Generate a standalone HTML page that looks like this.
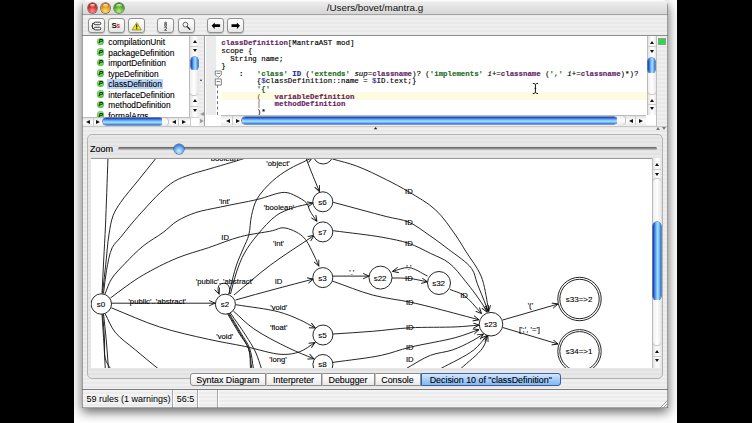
<!DOCTYPE html>
<html><head><meta charset="utf-8">
<style>
*{margin:0;padding:0;box-sizing:border-box}
html,body{width:752px;height:423px;overflow:hidden;background:#000}
body{position:relative;font-family:"Liberation Sans",sans-serif}
.a{position:absolute}
#desk{left:74px;top:0;width:603px;height:423px;background:#fdfdfd}
#win{left:82px;top:0;width:586px;height:408px;background:repeating-linear-gradient(#efefef 0,#efefef 2px,#e9e9e9 2px,#e9e9e9 4px);border-radius:6px 6px 0 0;box-shadow:0 4px 11px rgba(0,0,0,.6);overflow:hidden}
#title{left:0;top:0;width:586px;height:15px;background:linear-gradient(#fbfbfb 0,#fbfbfb 1px,#ececec 2px,#d6d6d6);border-bottom:1px solid #a2a2a2}
.tl{width:9.6px;height:9.6px;border-radius:50%;top:3.3px;box-shadow:0 0 0 .7px rgba(0,0,0,.55)}
.tl:after{content:"";position:absolute;left:2px;top:0.6px;width:5.6px;height:3.2px;border-radius:50%;background:linear-gradient(rgba(255,255,255,.9),rgba(255,255,255,.15))}
#ttl{left:0;width:586px;top:1.6px;text-align:center;font-size:9.8px;color:#111}
#tool{left:0;top:15px;width:586px;height:21.2px;border-bottom:1px solid #8f8f8f}
.btn{top:3.2px;width:17px;height:15.3px;border:1px solid #909090;border-radius:3px;background:linear-gradient(#ffffff,#f4f4f4 50%,#e4e4e4);box-shadow:0 1px 1px rgba(0,0,0,.2)}
.btn svg{position:absolute;left:0;top:0}
#tree{left:0;top:36px;width:107px;height:81px;background:#fff;overflow:hidden}
.row{position:absolute;left:13.8px;font-size:8.3px;color:#000;-webkit-text-stroke:0.12px #000;height:11px;line-height:11px;white-space:nowrap}
.row i{position:absolute;left:0.9px;top:0.7px;width:7.6px;height:7.6px;border-radius:50%;background:radial-gradient(circle at 50% 40%,#c8ffb8,#58d048 55%,#2a9a2a)}
.row i:after{content:"P";position:absolute;left:2.1px;top:-1.3px;font-size:6px;font-weight:bold;color:#000}
.row span{position:absolute;left:11px;top:0;padding:0 1.5px;height:10px;line-height:10.5px}
.mono{font-family:"Liberation Mono",monospace}
#code{left:136px;top:36px;width:428.5px;height:79px;background:#fff;overflow:hidden}
.ln{position:absolute;left:3.3px;font-family:"Liberation Mono",monospace;font-size:7.4px;line-height:7.6px;height:7.6px;white-space:pre;color:#000;-webkit-text-stroke:0.15px currentColor}
.p{color:#661f66;font-weight:bold}
.g{color:#1f6e1f;font-weight:bold}
.b{color:#1e2c96;font-weight:bold}
.it{font-style:italic}
.vs{background:linear-gradient(90deg,#e2e2e2,#fafafa 40%,#ffffff 60%,#e8e8e8);border-left:1px solid #bdbdbd}
.hs{background:linear-gradient(#e2e2e2,#fafafa 40%,#ffffff 60%,#e8e8e8);border-top:1px solid #bdbdbd}
.tri{position:absolute;width:0;height:0}
.up{border-left:2.3px solid transparent;border-right:2.3px solid transparent;border-bottom:3.3px solid #111}
.dn{border-left:2.3px solid transparent;border-right:2.3px solid transparent;border-top:3.3px solid #111}
.lf{border-top:2.5px solid transparent;border-bottom:2.5px solid transparent;border-right:4px solid #111;margin-top:-0.3px}
.rt{border-top:2.5px solid transparent;border-bottom:2.5px solid transparent;border-left:4px solid #111;margin-top:-0.3px}
.thumbv{background:linear-gradient(90deg,#1838a8 0,#3a78e0 20%,#7cc4ff 45%,#a8e4ff 60%,#68b4f8 80%,#3a70d0);border-radius:5px;box-shadow:0 0 0 .6px #203c90}
.thumbh{background:linear-gradient(#1838a8 0,#3a78e0 20%,#7cc4ff 45%,#a8e4ff 60%,#68b4f8 80%,#3a70d0);border-radius:5px;box-shadow:0 0 0 .6px #203c90}
#graph{left:8.5px;top:158px;width:561px;height:209.5px;background:#fff;overflow:hidden;border-top:1px solid #9a9a9a}
.tab{top:373.3px;height:13.2px;font-size:8.9px;line-height:12.3px;text-align:center;color:#000;-webkit-text-stroke:0.1px #000;border:1px solid #8d8d8d;border-left:1px solid #c4c4c4;background:linear-gradient(#ffffff,#f6f6f6 50%,#e8e8e8);}
#status{left:0;top:389px;width:586px;height:19px;border-top:1px solid #7d7d7d;background:repeating-linear-gradient(#f3f3f3 0,#f3f3f3 2px,#ececec 2px,#ececec 4px)}
.sdiv{position:absolute;top:0;width:2px;height:19px;border-left:1px solid #a8a8a8;border-right:1px solid #fff}
</style></head><body>
<div id="desk" class="a"></div>
<div id="win" class="a">
  <div id="title" class="a">
    <div class="a tl" style="left:5.6px;background:radial-gradient(circle at 50% 80%,#ff9090 0,#d83030 50%,#8c0c0c 95%)"></div>
    <div class="a tl" style="left:18.9px;background:radial-gradient(circle at 50% 80%,#ffe070 0,#eb9a10 50%,#9a5000 95%)"></div>
    <div class="a tl" style="left:32.2px;background:radial-gradient(circle at 50% 80%,#b8f080 0,#50b020 50%,#1e6008 95%)"></div>
    <div id="ttl" class="a">/Users/bovet/mantra.g</div>
  </div>
  <div id="tool" class="a">
    <div class="a btn" style="left:5.8px"></div>
    <div class="a btn" style="left:25.6px"></div>
    <div class="a btn" style="left:45.8px"></div>
    <div class="a btn" style="left:75.3px"></div>
    <div class="a btn" style="left:95.5px"></div>
    <div class="a btn" style="left:125.4px"></div>
    <div class="a btn" style="left:145.1px"></div>
  </div>

  <svg class="a" style="left:0;top:0" width="586" height="40" viewBox="82 0 586 40">
    <g fill="#f4f4f4" stroke="#111" stroke-width="0.8">
      <rect x="93.9" y="22.2" width="6.9" height="2.5" rx="1.25"/>
      <rect x="93.9" y="27.3" width="6.9" height="2.6" rx="1.3"/>
    </g>
    <path d="M93.9 23.45H92.5V28.6H93.9M92.5 26H91.2" fill="none" stroke="#111" stroke-width="0.8"/>
    <text x="111.6" y="28.4" font-family="Liberation Sans" font-weight="bold" font-size="8" fill="#111">S</text>
    <text x="116.5" y="28.4" font-family="Liberation Sans" font-weight="bold" font-size="6.5" fill="#e81818">s</text>
    <path d="M136.7 22.6L141.3 30H132.1Z" fill="#f4e800" stroke="#6a6a20" stroke-width="0.6"/>
    <path d="M136.7 24.6V27.6M136.7 28.3V29.2" stroke="#111" stroke-width="1.1"/>
    <circle cx="165.6" cy="23" r="0.95" fill="none" stroke="#222" stroke-width="0.7"/><circle cx="165.6" cy="25" r="1.05" fill="none" stroke="#222" stroke-width="0.7"/>
    <path d="M164.3 26.6H166.9" stroke="#555" stroke-width=".5"/>
    <path d="M164.5 28.1Q164.7 27 165.7 27.1Q166.8 27.3 166.4 28.4L164.5 30.3H166.9" fill="none" stroke="#222" stroke-width="0.75"/>
    <circle cx="185.4" cy="24.7" r="2.4" fill="#f4f4f4" stroke="#555" stroke-width="0.9"/>
    <path d="M187.1 26.6L189.8 29.2" stroke="#222" stroke-width="1.3" stroke-linecap="round"/>
    <path d="M211.6 25.65L214.7 22.4V24.2H220.1V27.1H214.7V28.9Z" fill="#000"/>
    <path d="M240 25.65L236.9 22.4V24.2H231.5V27.1H236.9V28.9Z" fill="#000"/>
  </svg>
  <!-- TREE -->
  <div id="tree" class="a"><div class="a" style="left:0;top:0.8px;width:107px;height:90px">
    <div class="row" style="top:0.3px"><i></i><span>compilationUnit</span></div>
    <div class="row" style="top:10.8px"><i></i><span>packageDefinition</span></div>
    <div class="row" style="top:21.3px"><i></i><span>importDefinition</span></div>
    <div class="row" style="top:31.8px"><i></i><span>typeDefinition</span></div>
    <div class="row" style="top:42.3px"><i></i><span style="background:#b8d4fa">classDefinition</span></div>
    <div class="row" style="top:52.8px"><i></i><span>interfaceDefinition</span></div>
    <div class="row" style="top:63.3px"><i></i><span>methodDefinition</span></div>
    <div class="row" style="top:73.8px"><i></i><span>formalArgs</span></div>
  </div></div>

  <!-- TREE SCROLLBARS -->
  <div class="a vs" style="left:107px;top:36px;width:9.5px;height:80.5px">
    <div class="tri up" style="left:2.6px;top:4.3px"></div>
    <div class="a" style="left:0;top:9.5px;width:8px;height:0.5px;background:#ccc"></div>
    <div class="tri dn" style="left:2.6px;top:12.8px"></div>
    <div class="a thumbv" style="left:0.8px;top:20.5px;width:7px;height:13.5px"></div>
    <div class="a" style="left:0;top:34px;width:8px;height:25px;border-radius:0 0 4px 4px;box-shadow:0 1px 1px rgba(0,0,0,.25);background:linear-gradient(90deg,#eee,#fff 50%,#e8e8e8)"></div>
    <div class="tri up" style="left:2.6px;top:63.3px"></div>
    <div class="a" style="left:0;top:69.5px;width:8px;height:0.5px;background:#ccc"></div>
    <div class="tri dn" style="left:2.6px;top:73.3px"></div>
  </div>
  <div class="a hs" style="left:0;top:116.5px;width:107.5px;height:9px">
    <div class="tri lf" style="left:4.3px;top:2.4px"></div>
    <div class="a" style="left:10.5px;top:0;width:0.5px;height:8px;background:#ccc"></div>
    <div class="tri rt" style="left:14.3px;top:2.4px"></div>
    <div class="a thumbh" style="left:20.7px;top:0.8px;width:60.7px;height:7.2px"></div>
    <div class="a" style="left:80px;top:0;width:6px;height:8px;border-radius:0 4px 4px 0;box-shadow:1px 0 1px rgba(0,0,0,.25);background:linear-gradient(#eee,#fff 50%,#e8e8e8)"></div>
    <div class="tri lf" style="left:89.8px;top:2.4px"></div>
    <div class="a" style="left:96px;top:0;width:0.5px;height:8px;background:#ccc"></div>
    <div class="tri rt" style="left:99.8px;top:2.4px"></div>
  </div>
  <div class="a" style="left:107.5px;top:116.5px;width:9px;height:9px;background:#fff;border-left:1px solid #d0d0d0;border-top:1px solid #d0d0d0"></div>
  <!-- SPLITTER V -->
  <div class="a" style="left:116.5px;top:36px;width:6px;height:90px;border-right:1px solid #a0a0a0"></div>
  <div class="tri up" style="left:117.7px;top:79px;border-bottom-color:#333;border-left-width:1.8px;border-right-width:1.8px;border-bottom-width:2.6px"></div>
  <div class="tri lf" style="left:117.5px;top:112.4px;border-right-color:#999"></div>
  <div class="tri rt" style="left:117.5px;top:119.6px;border-left-color:#999"></div>
  <!-- GUTTER -->
  <div class="a" style="left:123px;top:36px;width:13px;height:79px;background:#fff"></div>
  <div class="a" style="left:123.6px;top:36px;width:10.4px;height:79px;background:#ebebeb"></div>
  <div class="a" style="left:135.3px;top:85px;width:0;height:30px;border-left:1px dashed #777"></div>
  <div class="a" style="left:123px;top:115px;width:16px;height:10.5px;background:#fff"></div>
  <!-- CODE -->
  <div id="code" class="a">
    <div class="a" style="left:3.5px;top:56.2px;width:425px;height:7.6px;background:#fdfbe0"></div>
    <div class="ln" style="top:4.3px"><span class="p">classDefinition</span>[MantraAST mod]</div>
    <div class="ln" style="top:11.9px">scope {</div>
    <div class="ln" style="top:19.5px">  String name;</div>
    <div class="ln" style="top:27.1px">}</div>
    <div class="ln" style="top:34.7px">    <b>:</b>   <span class="g">'class'</span> <span class="b">ID</span> (<span class="g">'extends'</span> <span class="it">sup</span>=<span class="p">classname</span>)? (<span class="g">'implements'</span> <span class="it">i</span>+=<span class="p">classname</span> (<span class="g">','</span> <span class="it">i</span>+=<span class="p">classname</span>)*)?</div>
    <div class="ln" style="top:42.3px">        {<span style="color:#3030c0">$</span>classDefinition::name = <span style="color:#3030c0">$</span>ID.text;}</div>
    <div class="ln" style="top:49.9px">        <span class="g">'{'</span></div>
    <div class="ln" style="top:57.5px">        <span style="color:#7a5a3a">(</span>   <span class="p">variableDefinition</span></div>
    <div class="ln" style="top:65.1px">        <span style="color:#7a5a3a">|</span>   <span class="p">methodDefinition</span></div>
    <div class="ln" style="top:72.7px">        )*</div>
  </div>
  <svg class="a" style="left:448px;top:82px" width="10" height="13" viewBox="0 0 10 13">
    <path d="M2.8 1.3Q4.2 1.3 5.4 2.3Q6.6 1.3 8 1.3M5.4 2.3V10.6M2.8 11.6Q4.2 11.6 5.4 10.6Q6.6 11.6 8 11.6M4.6 6.4H6.2" fill="none" stroke="#111" stroke-width="1"/>
  </svg>
  <!-- fold markers -->
  <svg class="a" style="left:131px;top:69.5px" width="10" height="16" viewBox="0 0 10 16">
    <path d="M2.3 1h6v4l-3 2.4l-3-2.4z" fill="#fff" stroke="#666" stroke-width=".8"/>
    <path d="M3.5 3.4h3.6" stroke="#444" stroke-width=".7"/>
    <path d="M2.3 8.9h6v6.2h-6z" fill="#fff" stroke="#666" stroke-width=".8"/>
    <path d="M3.5 11.6h3.6" stroke="#444" stroke-width=".7"/>
  </svg>
  <!-- CODE SCROLLBARS -->
  <div class="a vs" style="left:564.5px;top:36px;width:9px;height:78.5px">
    <div class="tri up" style="left:2.6px;top:5.0px"></div>
    <div class="a" style="left:0;top:10px;width:8px;height:0.5px;background:#ccc"></div>
    <div class="tri dn" style="left:2.6px;top:13.8px"></div>
    <div class="a thumbv" style="left:0.8px;top:22px;width:7px;height:15px"></div>
    <div class="a" style="left:0;top:37px;width:8px;height:21px;border-radius:0 0 4px 4px;box-shadow:0 1px 1px rgba(0,0,0,.25);background:linear-gradient(90deg,#eee,#fff 50%,#e8e8e8)"></div>
    <div class="tri up" style="left:2.6px;top:62.8px"></div>
    <div class="a" style="left:0;top:68px;width:8px;height:0.5px;background:#ccc"></div>
    <div class="tri dn" style="left:2.6px;top:71.3px"></div>
  </div>
  <div class="a hs" style="left:139px;top:115.2px;width:425.5px;height:10.3px">
    <div class="tri lf" style="left:4.8px;top:3.0px"></div>
    <div class="a" style="left:10.5px;top:0;width:0.5px;height:9px;background:#ccc"></div>
    <div class="tri rt" style="left:14.8px;top:3.0px"></div>
    <div class="a thumbh" style="left:20.8px;top:0.7px;width:375.5px;height:7.4px"></div>
    <div class="a" style="left:395.5px;top:0;width:8px;height:9px;border-radius:0 4px 4px 0;box-shadow:1px 0 1px rgba(0,0,0,.25);background:linear-gradient(#eee,#fff 50%,#e8e8e8)"></div>
    <div class="tri lf" style="left:407.8px;top:3.0px"></div>
    <div class="a" style="left:413.5px;top:0;width:0.5px;height:9px;background:#ccc"></div>
    <div class="tri rt" style="left:417.8px;top:3.0px"></div>
  </div>
  <div class="a" style="left:564.2px;top:114.5px;width:9.8px;height:10.8px;background:#fff"></div>
  <!-- right strip -->
  <div class="a" style="left:573.5px;top:36px;width:12.5px;height:90px;border-left:1px solid #c0c0c0"></div>
  <div class="a" style="left:576.3px;top:37.9px;width:7.6px;height:7.5px;background:#22dd44;border:1px solid #999"></div>
  <div class="tri up" style="left:573.6px;top:127.1px;border-bottom-color:#7a7a7a;border-left-width:2.4px;border-right-width:2.4px;border-bottom-width:3.2px;z-index:2"></div>
  <div class="tri dn" style="left:580.4px;top:127.1px;border-top-color:#7a7a7a;border-left-width:2.4px;border-right-width:2.4px;border-top-width:3.2px;z-index:2"></div>
  <div class="a" style="left:0;top:125.5px;width:586px;height:0.6px;background:#c8c8c8"></div>
  <svg class="a" style="left:291px;top:126px" width="6" height="4" viewBox="0 0 6 4"><path d="M0.8 3.3L2.6 1L4.4 3.3Z" fill="#222"/></svg>
  <!-- GROUP BOX -->
  <div class="a" style="left:5px;top:134px;width:576.2px;height:244.6px;border:1px solid #b4b4b4;border-radius:5px;background:repeating-linear-gradient(#e8e8e8 0,#e8e8e8 2px,#e2e2e2 2px,#e2e2e2 4px)"></div>
  <div class="a" style="left:8px;top:143.5px;font-size:9px;color:#000;-webkit-text-stroke:0.12px #000">Zoom</div>
  <div class="a" style="left:35.5px;top:147.3px;width:539.5px;height:3.2px;border-radius:2px;background:linear-gradient(#5a5a5a,#9a9a9a 60%,#c8c8c8)"></div>
  <div class="a" style="left:91.7px;top:143.9px;width:10px;height:10px;border-radius:50%;background:radial-gradient(circle at 50% 70%,#d8f0ff 0,#6cb0f4 45%,#1d5ccc 90%);box-shadow:0 0 0 .6px #34508a"></div>
  <!-- MAIN GRAPH -->
  <div id="graph" class="a">
<svg class="a" style="left:0;top:-1px" width="561" height="209.5" viewBox="90.5 158 561 209.5">
<defs><marker id="ah" markerWidth="8" markerHeight="8" refX="6.2" refY="3" orient="auto" markerUnits="userSpaceOnUse"><path d="M0.3 0.3L6.2 3L0.3 5.7" fill="none" stroke="#111" stroke-width="0.9"/></marker></defs>
<g fill="none" stroke="#1a1a1a" stroke-width="0.95">
<path d="M101.5 293.5C102.1 282.3 102.6 271.3 103.2 260.0C103.8 248.5 104.4 238.6 105.0 225.0C105.8 206.1 106.7 179.7 107.5 157.0"/>
<path d="M102.0 293.5C103.2 283.0 104.4 272.1 105.5 262.0C106.5 252.7 107.1 243.2 108.4 235.0C109.5 228.0 110.4 221.3 112.6 215.6C114.5 210.6 116.9 207.2 120.2 202.3C124.7 195.7 132.0 187.5 138.0 180.0C144.1 172.4 150.3 164.7 156.5 157.0"/>
<path d="M103.0 293.5C104.0 285.8 104.6 278.0 106.0 270.4C107.5 262.8 108.8 253.5 111.7 247.7C113.9 243.3 117.1 241.1 120.0 237.5C123.2 233.6 126.3 229.4 130.0 225.0C134.4 219.7 140.0 213.5 145.0 208.0C149.9 202.7 154.7 197.3 159.7 192.7C164.3 188.5 168.8 184.3 173.9 181.3C178.9 178.3 184.7 176.4 190.0 174.5C195.1 172.7 198.9 171.8 205.1 170.0C215.0 167.1 236.1 161.0 243.5 158.5C246.6 157.4 247.8 156.8 250.0 156.0"/>
<path d="M104.5 294.0C106.7 289.0 107.9 283.8 111.0 279.0C114.5 273.5 119.9 268.3 125.0 263.0C130.4 257.3 136.4 251.1 142.7 246.0C148.9 240.9 156.6 236.9 162.6 232.4C167.8 228.5 171.5 224.2 176.7 221.0C182.3 217.6 188.5 214.9 195.2 212.6C202.7 210.1 210.9 209.0 220.0 207.0C231.0 204.6 245.5 202.1 256.8 199.5C266.6 197.2 277.1 192.2 284.2 192.4C288.8 192.5 291.9 194.4 295.5 196.1C299.2 197.9 303.9 200.4 306.2 203.2C308.1 205.5 308.0 208.3 309.5 211.0C311.3 214.3 314.1 217.9 316.4 221.3" marker-end="url(#ah)"/>
<path d="M110.0 298.0C115.2 294.1 120.3 290.1 125.7 286.3C131.2 282.4 135.9 278.9 142.7 275.0C152.0 269.6 165.4 262.6 176.7 258.0C187.2 253.7 197.5 251.2 208.0 247.7C218.6 244.1 229.2 239.5 240.0 236.7C250.6 233.9 264.1 232.5 272.0 230.7C276.7 229.6 279.1 227.4 283.3 227.8C288.9 228.3 297.4 232.2 302.2 236.4C306.7 240.3 309.0 246.4 311.7 251.5C314.3 256.3 316.1 261.2 318.3 266.0" marker-end="url(#ah)"/>
<path d="M111.0 303.2L214.5 303.2" marker-end="url(#ah)"/>
<path d="M110.8 307.8C126.8 314.2 142.6 321.6 158.9 326.9C175.0 332.1 192.8 335.9 208.0 339.3C221.0 342.2 232.1 343.9 244.3 346.4C256.6 348.9 271.3 354.1 281.5 354.4C288.5 354.6 293.8 353.7 299.3 351.7C304.8 349.7 309.4 345.6 314.5 342.5" marker-end="url(#ah)"/>
<path d="M104.8 314.0C108.1 320.1 110.1 326.5 114.6 332.2C119.8 338.7 128.0 344.0 135.0 350.0C142.4 356.3 150.3 362.7 158.0 369.0"/>
<path d="M102.2 314.0C102.8 322.7 103.6 332.0 104.0 340.0C104.4 346.8 103.4 353.6 104.8 358.8C105.9 362.9 108.4 365.6 110.2 369.0"/>
<path d="M101.5 314.0C102.2 324.3 102.9 335.3 103.5 345.0C104.0 353.5 104.4 361.0 104.8 369.0"/>
<path d="M103.0 314.0C103.9 322.4 104.9 330.5 105.7 339.3C106.6 348.8 107.2 359.1 108.0 369.0"/>
<path d="M228.4 294.0C230.9 284.3 233.2 273.3 236.0 265.0C238.2 258.5 240.8 253.3 243.0 248.0C244.9 243.4 247.0 239.9 248.3 235.0C249.8 229.3 249.6 221.8 251.0 215.6C252.4 209.8 253.5 204.4 256.5 199.0C260.0 192.8 266.4 186.1 272.0 181.0C277.1 176.3 282.7 172.6 288.4 169.2C293.9 165.9 301.2 162.9 305.5 160.7C308.2 159.4 309.8 158.6 312.0 157.5" marker-end="url(#ah)"/>
<path d="M230.0 294.0C232.0 286.7 233.6 279.0 236.0 272.0C238.3 265.4 240.6 259.1 244.0 253.0C247.5 246.7 251.9 240.9 256.8 235.0C262.3 228.4 269.2 220.2 275.7 215.6C281.0 211.8 286.1 210.1 292.0 208.0C298.3 205.8 305.7 204.7 312.5 203.0" marker-end="url(#ah)"/>
<path d="M305.0 157.0C307.5 163.4 310.2 170.3 312.6 176.3C314.8 181.7 316.8 186.4 318.9 191.5" marker-end="url(#ah)"/>
<path d="M233.5 295.0C245.7 285.0 257.1 274.7 270.0 265.0C283.7 254.8 299.1 245.3 313.6 235.4" marker-end="url(#ah)"/>
<path d="M235.0 300.0C248.3 296.3 261.8 292.5 275.0 289.0C287.8 285.6 300.3 282.3 313.0 279.0" marker-end="url(#ah)"/>
<path d="M235.4 304.7C249.6 307.1 266.4 308.7 278.0 311.8C286.4 314.1 292.8 316.9 299.3 319.8C305.0 322.3 309.6 325.3 314.8 328.0" marker-end="url(#ah)"/>
<path d="M232.8 311.0C239.6 316.9 245.1 323.1 253.2 328.7C263.1 335.6 277.7 342.9 288.6 348.2C297.5 352.5 305.1 355.3 313.4 358.8" marker-end="url(#ah)"/>
<path d="M226.6 313.0C230.7 320.0 235.2 327.7 239.0 334.0C242.2 339.2 245.8 342.8 247.9 348.2C250.2 354.3 250.2 362.1 251.4 369.0"/>
<path d="M227.5 313.0C231.7 320.0 236.3 327.4 240.0 334.0C243.2 339.7 246.8 344.3 248.5 350.0C250.2 355.9 249.5 362.7 250.0 369.0"/>
<path d="M228.5 313.0C232.7 320.0 237.3 327.7 241.0 334.0C244.0 339.1 247.0 342.7 249.0 348.0C251.3 354.1 251.7 362.0 253.0 369.0"/>
<path d="M229.5 312.5C234.7 320.0 240.5 327.9 245.0 335.0C248.8 341.0 252.3 346.2 255.0 352.0C257.6 357.5 259.1 363.3 261.1 369.0"/>
<path d="M332.0 159.0C340.0 161.3 347.7 162.9 356.0 166.0C365.5 169.5 376.5 175.0 385.7 179.6C393.8 183.7 400.6 187.2 408.4 191.9C417.1 197.2 427.3 202.7 435.1 209.9C442.9 217.1 449.6 227.4 455.0 235.0C459.2 241.0 461.6 245.4 465.4 251.5C470.0 258.9 477.0 267.2 480.6 276.1C484.3 285.1 486.0 298.8 487.2 305.0C487.8 307.9 487.9 309.3 488.2 311.5" marker-end="url(#ah)"/>
<path d="M332.7 202.3C350.4 207.0 371.7 212.9 385.7 216.5C394.8 218.9 401.3 219.1 408.4 222.2C415.6 225.3 421.9 230.5 428.5 235.0C435.2 239.6 441.6 244.3 448.4 249.6C455.8 255.4 466.4 261.9 471.1 268.5C474.6 273.4 474.7 278.2 476.8 283.7C479.3 290.2 483.4 299.9 485.3 305.0C486.3 307.8 486.8 309.3 487.5 311.5" marker-end="url(#ah)"/>
<path d="M332.7 230.7C349.1 232.9 368.1 234.8 381.9 237.3C392.1 239.2 400.2 240.6 408.4 243.4C416.1 246.0 423.1 250.0 430.0 253.4C436.4 256.5 442.8 258.5 448.4 262.9C454.7 267.7 459.9 275.0 465.4 281.8C471.3 289.0 478.9 299.4 482.5 305.0C484.4 307.9 485.2 309.7 486.5 312.0" marker-end="url(#ah)"/>
<path d="M332.5 276.1L368.5 276.1" marker-end="url(#ah)"/>
<path d="M331.8 281.0C345.2 285.7 358.7 291.4 372.0 295.0C384.5 298.4 398.7 299.8 409.3 302.1C417.2 303.8 421.7 304.9 430.0 307.0C442.8 310.2 462.3 315.5 478.5 319.8" marker-end="url(#ah)"/>
<path d="M391.5 278.0C397.1 278.1 402.7 277.8 408.4 278.4C414.5 279.0 420.8 280.7 427.0 281.8" marker-end="url(#ah)"/>
<path d="M427.0 276.0C420.8 273.2 414.5 268.2 408.4 267.6C402.9 267.1 397.5 270.1 392.0 271.4" marker-end="url(#ah)"/>
<path d="M449.3 289.4C454.0 291.4 458.8 292.2 463.5 295.4C469.5 299.5 475.2 307.5 481.1 313.6" marker-end="url(#ah)"/>
<path d="M332.5 334.0C345.7 333.1 359.0 332.4 372.0 331.3C384.6 330.3 396.2 328.5 409.3 327.8C423.8 327.0 442.7 327.5 455.4 326.9C464.4 326.5 470.8 325.7 478.5 325.1" marker-end="url(#ah)"/>
<path d="M332.5 362.4C348.6 360.0 367.0 358.3 380.9 355.3C391.7 353.0 398.6 349.9 409.3 347.3C422.8 344.0 442.7 341.0 455.4 337.5C464.5 335.0 470.8 332.2 478.5 329.6" marker-end="url(#ah)"/>
<path d="M405.0 369.0C413.3 364.4 421.7 358.5 430.0 355.3C437.4 352.5 444.9 352.4 451.9 350.0C458.7 347.6 465.8 344.1 471.4 341.1C475.8 338.7 479.1 336.4 482.9 334.0" marker-end="url(#ah)"/>
<path d="M439.5 369.0C450.7 362.7 464.9 356.6 473.2 350.0C479.1 345.3 482.1 340.3 486.5 335.5" marker-end="url(#ah)"/>
<path d="M459.9 369.0C467.3 362.1 477.4 354.7 482.0 348.2C485.1 343.8 485.6 339.7 487.4 335.5" marker-end="url(#ah)"/>
<path d="M502.2 320.0L557.5 304.0" marker-end="url(#ah)"/>
<path d="M502.2 327.5L557.5 344.0" marker-end="url(#ah)"/>
<path d="M228.5 294C230.5 287 227.5 283 222.5 283.3C217.5 283.8 216.5 288.5 218.6 294" marker-end="url(#ah)"/>
</g>
<g font-family="Liberation Sans" font-size="7.7" fill="#000" stroke="#000" stroke-width="0.12" text-anchor="middle">
<text x="156.7" y="303.8">&#39;public&#39;..&#39;abstract&#39;</text>
<text x="224.0" y="284.3">&#39;public&#39;..&#39;abstract&#39;</text>
<text x="224.0" y="203.9">&#39;int&#39;</text>
<text x="224.6" y="239.8">ID</text>
<text x="224.0" y="161.0">&#39;boolean&#39;</text>
<text x="277.6" y="166.0">&#39;object&#39;</text>
<text x="278.5" y="209.5">&#39;boolean&#39;</text>
<text x="278.0" y="245.5">&#39;int&#39;</text>
<text x="278.0" y="284.3">ID</text>
<text x="278.2" y="309.9">&#39;void&#39;</text>
<text x="278.2" y="330.3">&#39;float&#39;</text>
<text x="277.5" y="362.2">&#39;long&#39;</text>
<text x="224.3" y="339.2">&#39;void&#39;</text>
<text x="408.4" y="194.4">ID</text>
<text x="408.4" y="224.7">ID</text>
<text x="408.4" y="245.9">ID</text>
<text x="408.4" y="280.9">ID</text>
<text x="409.3" y="304.6">ID</text>
<text x="409.3" y="330.3">ID</text>
<text x="409.3" y="349.8">ID</text>
<text x="409.3" y="362.2">ID</text>
<text x="463.5" y="297.9">ID</text>
<text x="351.3" y="274.8">&#39;.&#39;</text>
<text x="408.4" y="270.1">&#39;.&#39;</text>
<text x="529.9" y="308.1">&#39;(&#39;</text>
<text x="529.0" y="331.9">[&#39;;&#39;, &#39;=&#39;]</text>
</g>
<g fill="#fff" stroke="#1a1a1a" stroke-width="0.95">
<circle cx="322.6" cy="154.0" r="10.0"/>
<circle cx="100.8" cy="304.0" r="10.2"/>
<circle cx="224.9" cy="304.2" r="10.0"/>
<circle cx="322.3" cy="201.8" r="10.0"/>
<circle cx="322.3" cy="231.9" r="10.0"/>
<circle cx="322.3" cy="277.6" r="10.0"/>
<circle cx="380.0" cy="277.6" r="11.5"/>
<circle cx="438.5" cy="283.0" r="11.5"/>
<circle cx="322.4" cy="335.0" r="10.0"/>
<circle cx="322.4" cy="364.5" r="10.0"/>
<circle cx="490.5" cy="324.2" r="11.8"/>
<circle cx="579.0" cy="299.0" r="21.7"/>
<circle cx="579.0" cy="299.0" r="19.7"/>
<circle cx="579.0" cy="351.3" r="21.7"/>
<circle cx="579.0" cy="351.3" r="19.7"/>
</g>
<g font-family="Liberation Sans" font-size="8" fill="#000" stroke="#000" stroke-width="0.1" text-anchor="middle">
<text x="100.4" y="306.9">s0</text>
<text x="224.5" y="307.1">s2</text>
<text x="321.9" y="204.7">s6</text>
<text x="321.9" y="234.8">s7</text>
<text x="321.9" y="280.5">s3</text>
<text x="379.6" y="280.5">s22</text>
<text x="438.1" y="285.9">s32</text>
<text x="322.0" y="337.9">s5</text>
<text x="322.0" y="367.4">s8</text>
<text x="490.1" y="327.1">s23</text>
<text x="578.6" y="301.9">s33=&gt;2</text>
<text x="578.6" y="354.2">s34=&gt;1</text>
</g></svg>
  </div>
  <!-- GSB -->
  <div class="a vs" style="left:569.5px;top:158px;width:9.5px;height:209.5px">
    <div class="tri up" style="left:2.8px;top:5.1px"></div>
    <div class="a" style="left:0;top:11px;width:8.5px;height:0.5px;background:#ccc"></div>
    <div class="tri dn" style="left:2.8px;top:15.3px"></div>
    <div class="a" style="left:0;top:21px;width:8.5px;height:43px;border-radius:4px 4px 0 0;box-shadow:0 -1px 1px rgba(0,0,0,.25);background:linear-gradient(90deg,#eee,#fff 50%,#e8e8e8)"></div>
    <div class="a thumbv" style="left:0.9px;top:64px;width:7.2px;height:78px;border-radius:4px"></div>
    <div class="a" style="left:0;top:142px;width:8.5px;height:45px;border-radius:0 0 4px 4px;box-shadow:0 1px 1px rgba(0,0,0,.25);background:linear-gradient(90deg,#eee,#fff 50%,#e8e8e8)"></div>
    <div class="tri up" style="left:2.8px;top:191.8px"></div>
    <div class="a" style="left:0;top:197.5px;width:8.5px;height:0.5px;background:#ccc"></div>
    <div class="tri dn" style="left:2.8px;top:201.3px"></div>
  </div>
  <!-- TABS -->
  <div class="a tab" style="left:107.8px;width:76px;border-left:1px solid #8d8d8d;border-radius:3px 0 0 3px">Syntax Diagram</div>
  <div class="a tab" style="left:183.6px;width:56px">Interpreter</div>
  <div class="a tab" style="left:239.5px;width:53px">Debugger</div>
  <div class="a tab" style="left:292.5px;width:46px">Console</div>
  <div class="a tab" style="left:338.5px;width:140.5px;background:linear-gradient(#d4e8ff,#a8cdf8 50%,#80b8f4);border-radius:0 3px 3px 0;border-color:#3e5e9e">Decision 10 of "classDefinition"</div>
  <!-- STATUS -->
  <div id="status" class="a">
    <div class="a" style="left:4.4px;top:3.7px;font-size:9px;color:#000">59 rules (1 warnings)</div>
    <div class="sdiv" style="left:89.7px"></div>
    <div class="a" style="left:94.8px;top:3.7px;font-size:9px;color:#000">56:5</div>
    <div class="sdiv" style="left:115px"></div>
    <div class="sdiv" style="left:135.3px"></div>
  </div>
  <svg class="a" style="left:576px;top:398px" width="10" height="10" viewBox="0 0 10 10">
    <path d="M9.5 2.5L2.5 9.5M9.5 5.5L5.5 9.5M9.5 8.2L8.2 9.5" stroke="#8a8a8a" stroke-width="0.8"/>
    <path d="M9.5 3.5L3.5 9.5M9.5 6.5L6.5 9.5" stroke="#fff" stroke-width="0.6"/>
  </svg>
  <div class="a" style="left:0;top:0;width:1px;height:408px;background:rgba(90,90,90,.55);z-index:5"></div>
  <div class="a" style="left:585px;top:0;width:1px;height:408px;background:rgba(90,90,90,.55);z-index:5"></div>
  <div class="a" style="left:0;top:407px;width:586px;height:1px;background:rgba(90,90,90,.5);z-index:5"></div>
</div>
</body></html>
